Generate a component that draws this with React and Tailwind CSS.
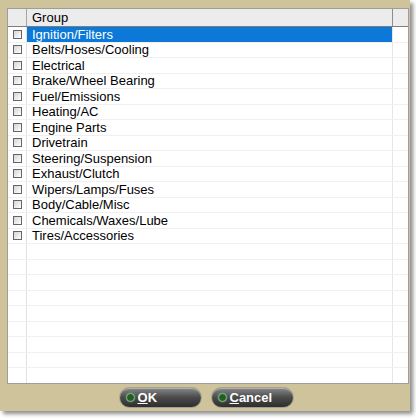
import React from "react";

const groups = [
  "Ignition/Filters",
  "Belts/Hoses/Cooling",
  "Electrical",
  "Brake/Wheel Bearing",
  "Fuel/Emissions",
  "Heating/AC",
  "Engine Parts",
  "Drivetrain",
  "Steering/Suspension",
  "Exhaust/Clutch",
  "Wipers/Lamps/Fuses",
  "Body/Cable/Misc",
  "Chemicals/Waxes/Lube",
  "Tires/Accessories",
];

const TOTAL_ROWS = 23;

// casilla de seleccion
const Check = () => (
  <span className="block w-[9px] h-[9px] border border-[#666] bg-gradient-to-br from-[#d4d4d4] to-white" />
);

// boton redondeado con punto verde
const PillButton = ({ hotkey, rest }) => (
  <button className="w-[83px] h-[21px] rounded-full border border-[#a3a08e] bg-gradient-to-b from-[#8a8a8a] via-[#4a4a4a] to-[#2e2e2e] flex items-center pl-[6px] gap-[3px] shadow-[inset_0_1px_0_rgba(255,255,255,0.35)]">
    <span className="w-[9px] h-[9px] rounded-full bg-[#1f5f26] border border-[#8fb58a] shadow-[0_0_2px_rgba(120,200,120,0.6)]" />
    <span className="text-white font-bold text-[13px] leading-none">
      <span className="underline">{hotkey}</span>
      {rest}
    </span>
  </button>
);

export default function App() {
  const rows = Array.from({ length: TOTAL_ROWS }, (_, i) => groups[i] ?? null);

  return (
    <div
      className="w-[416px] h-[420px] bg-white"
      style={{ fontFamily: '"Liberation Sans", Arial, sans-serif' }}
    >
      <div className="w-[410px] h-[411px] bg-[#cec39b] flex flex-col shadow-[3px_3px_4px_rgba(0,0,0,0.45)]">
        {/* grilla */}
        <div className="mt-[8px] ml-[7px] mr-[1px] h-[376px] bg-white border border-[#9d9d9d] flex flex-col overflow-hidden">
          <div className="flex h-[18px] shrink-0 bg-[#ececec] border-b border-[#7d7d7d] text-[13px] text-black">
            <div className="w-[19px] border-r border-[#a6a6a6]" />
            <div className="flex-1 flex items-center pl-[5px] border-r border-[#8e8e8e]">Group</div>
            <div className="w-[15px]" />
          </div>
          {rows.map((g, i) => {
            const selected = i === 0;
            return (
              <div key={i} className="flex h-[15.5px] shrink-0 border-b border-[#f0f0f0] text-[13px]">
                <div className="w-[19px] flex items-center justify-center border-r border-[#e2e2e2]">
                  {g && <Check />}
                </div>
                <div
                  className={
                    "flex-1 flex items-center pl-[5px] border-r border-[#e6e6e6] " +
                    (selected ? "bg-[#0c79d8] text-white" : "text-black")
                  }
                >
                  {g}
                </div>
                <div className="w-[15px]" />
              </div>
            );
          })}
        </div>

        {/* botones */}
        <div className="flex-1 flex items-center justify-center gap-[9px] pl-[2px]">
          <PillButton hotkey="O" rest="K" />
          <PillButton hotkey="C" rest="ancel" />
        </div>
      </div>
    </div>
  );
}
